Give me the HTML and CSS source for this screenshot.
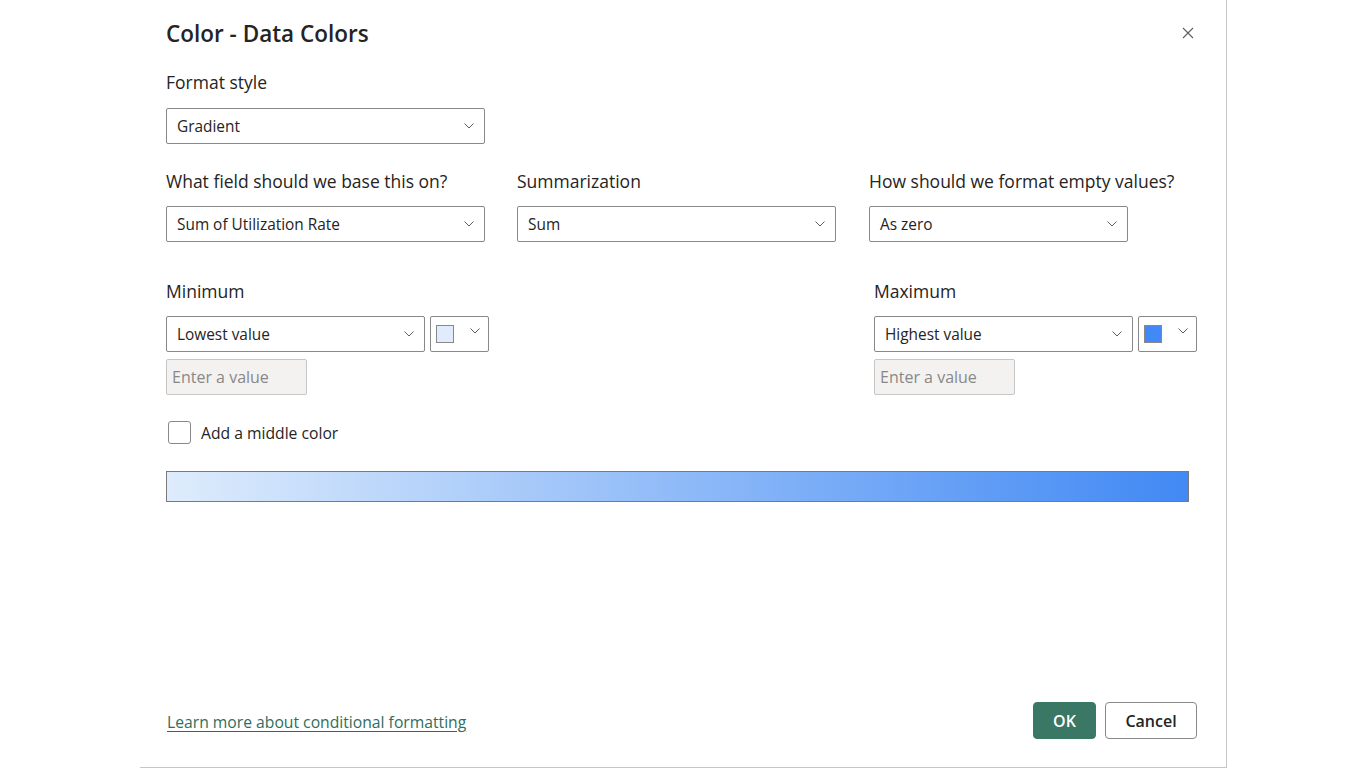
FILE: index.html
```html
<!DOCTYPE html>
<html lang="en">
<head>
<meta charset="utf-8">
<title>Color - Data Colors</title>
<link rel="stylesheet" href="styles.css">
</head>
<body>
<div class="dialog">
  <div class="header">
    <h1 class="title">Color - Data Colors</h1>
    <button class="close" aria-label="Close">
      <svg width="12" height="12" viewBox="0 0 12 12"><path d="M1 1L11 11M11 1L1 11" stroke="#605e5c" stroke-width="1.1" fill="none"/></svg>
    </button>
  </div>

  <div class="label first">Format style</div>
  <div class="select w319"><span>Gradient</span><svg class="chev" width="10" height="6" viewBox="0 0 10 6"><path d="M0.5 0.5L5 5L9.5 0.5" stroke="#605e5c" stroke-width="1" fill="none"/></svg></div>

  <div class="row3">
    <div class="col">
      <div class="label">What field should we base this on?</div>
      <div class="select w319"><span>Sum of Utilization Rate</span><svg class="chev" width="10" height="6" viewBox="0 0 10 6"><path d="M0.5 0.5L5 5L9.5 0.5" stroke="#605e5c" stroke-width="1" fill="none"/></svg></div>
    </div>
    <div class="col">
      <div class="label">Summarization</div>
      <div class="select w319"><span>Sum</span><svg class="chev" width="10" height="6" viewBox="0 0 10 6"><path d="M0.5 0.5L5 5L9.5 0.5" stroke="#605e5c" stroke-width="1" fill="none"/></svg></div>
    </div>
    <div class="col">
      <div class="label">How should we format empty values?</div>
      <div class="select w259"><span>As zero</span><svg class="chev" width="10" height="6" viewBox="0 0 10 6"><path d="M0.5 0.5L5 5L9.5 0.5" stroke="#605e5c" stroke-width="1" fill="none"/></svg></div>
    </div>
  </div>

  <div class="minmax">
    <div class="group">
      <div class="label">Minimum</div>
      <div class="pickrow">
        <div class="select w259"><span>Lowest value</span><svg class="chev" width="10" height="6" viewBox="0 0 10 6"><path d="M0.5 0.5L5 5L9.5 0.5" stroke="#605e5c" stroke-width="1" fill="none"/></svg></div>
        <div class="picker"><span class="swatch light"></span><svg class="chev up" width="10" height="6" viewBox="0 0 10 6"><path d="M0.5 0.5L5 5L9.5 0.5" stroke="#605e5c" stroke-width="1" fill="none"/></svg></div>
      </div>
      <div class="input">Enter a value</div>
    </div>
    <div class="group">
      <div class="label max">Maximum</div>
      <div class="pickrow">
        <div class="select w259"><span>Highest value</span><svg class="chev" width="10" height="6" viewBox="0 0 10 6"><path d="M0.5 0.5L5 5L9.5 0.5" stroke="#605e5c" stroke-width="1" fill="none"/></svg></div>
        <div class="picker"><span class="swatch blue"></span><svg class="chev up" width="10" height="6" viewBox="0 0 10 6"><path d="M0.5 0.5L5 5L9.5 0.5" stroke="#605e5c" stroke-width="1" fill="none"/></svg></div>
      </div>
      <div class="input">Enter a value</div>
    </div>
  </div>

  <label class="check"><span class="box"></span><span>Add a middle color</span></label>

  <div class="gradient"></div>

  <div class="footer">
    <a class="link" href="#">Learn more about conditional formatting</a>
    <div class="buttons">
      <button class="btn ok">OK</button>
      <button class="btn cancel">Cancel</button>
    </div>
  </div>
</div>
</body>
</html>
```

FILE: styles.css
```css
* { box-sizing: border-box; }
html, body { margin: 0; padding: 0; background: #ffffff; }
body {
  font-family: "Open Sans", "Noto Sans", "Liberation Sans", sans-serif;
  color: #252423;
}
.dialog {
  margin-left: 140px;
  width: 1087px;
  height: 768px;
  border-right: 1px solid #c8c6c4;
  border-bottom: 1px solid #c8c6c4;
  padding: 0 29px 28px 26px;
  display: flex;
  flex-direction: column;
}
.header {
  height: 66px;
  display: flex;
  align-items: center;
  justify-content: space-between;
}
.title {
  margin: 0;
  font-size: 22.5px;
  font-weight: 600;
  color: #252423;
}
.close {
  border: 0;
  background: none;
  padding: 0;
  width: 12px;
  height: 12px;
  margin-right: 3px;
  display: flex;
}
.label {
  font-size: 17.5px;
  line-height: 24px;
  height: 24px;
  margin-bottom: 13px;
  white-space: nowrap;
}
.label.first { margin-top: 4px; margin-bottom: 14px; }
.select {
  height: 36px;
  border: 1px solid #8a8886;
  border-radius: 2px;
  display: flex;
  align-items: center;
  justify-content: space-between;
  padding: 0 10px 0 10px;
  font-size: 15.4px;
  background: #fff;
}
.w319 { width: 319px; }
.w259 { width: 259px; }
.chev { flex: none; }
.chev.up { align-self: flex-start; margin-top: 11px; }
.row3 {
  margin-top: 25px;
  display: grid;
  grid-template-columns: 351px 352px auto;
}
.minmax {
  margin-top: 37px;
  display: flex;
  justify-content: space-between;
}
.pickrow {
  display: flex;
  gap: 5px;
}
.picker {
  width: 59px;
  height: 36px;
  border: 1px solid #8a8886;
  border-radius: 2px;
  display: flex;
  align-items: flex-start;
  justify-content: space-between;
  padding: 0 8px 0 5px;
}
.swatch {
  width: 18px;
  height: 18px;
  margin-top: 8px;
  border: 1px solid #8a8886;
}
.swatch.light { background: #deecfc; }
.swatch.blue { background: #4189f4; }
.input {
  margin-top: 7px;
  width: 141px;
  height: 36px;
  background: #f3f2f1;
  border: 1px solid #c8c6c4;
  border-radius: 2px;
  color: #8a8886;
  font-size: 16px;
  line-height: 34px;
  padding-left: 5px;
}
.check {
  margin-top: 26px;
  margin-left: 2px;
  display: flex;
  align-items: center;
  gap: 10px;
  font-size: 15.7px;
  height: 23px;
}
.box {
  width: 23px;
  height: 23px;
  border: 1px solid #8a8886;
  border-radius: 3px;
}
.gradient {
  margin-top: 27px;
  width: 1023px;
  height: 31px;
  border: 1px solid #7a7a7a;
  background: linear-gradient(to right, #deecfc, #4189f4);
}
.footer {
  margin-top: auto;
  display: flex;
  justify-content: space-between;
  align-items: center;
}
.link {
  margin-left: 1px;
  margin-top: 2px;
  color: #2e6e5c;
  font-size: 15.7px;
  text-decoration: underline;
  text-underline-offset: 3px;
}
.buttons { display: flex; gap: 9px; }
.btn {
  height: 37px;
  border-radius: 4px;
  font-family: "Open Sans", "Noto Sans", "Liberation Sans", sans-serif;
  font-size: 16px;
  font-weight: 600;
  cursor: pointer;
}
.ok {
  width: 63px;
  background: #3a7764;
  border: 1px solid #3a7764;
  color: #fff;
}
.cancel {
  width: 92px;
  background: #fff;
  border: 1px solid #8a8886;
  color: #252423;
}
```
